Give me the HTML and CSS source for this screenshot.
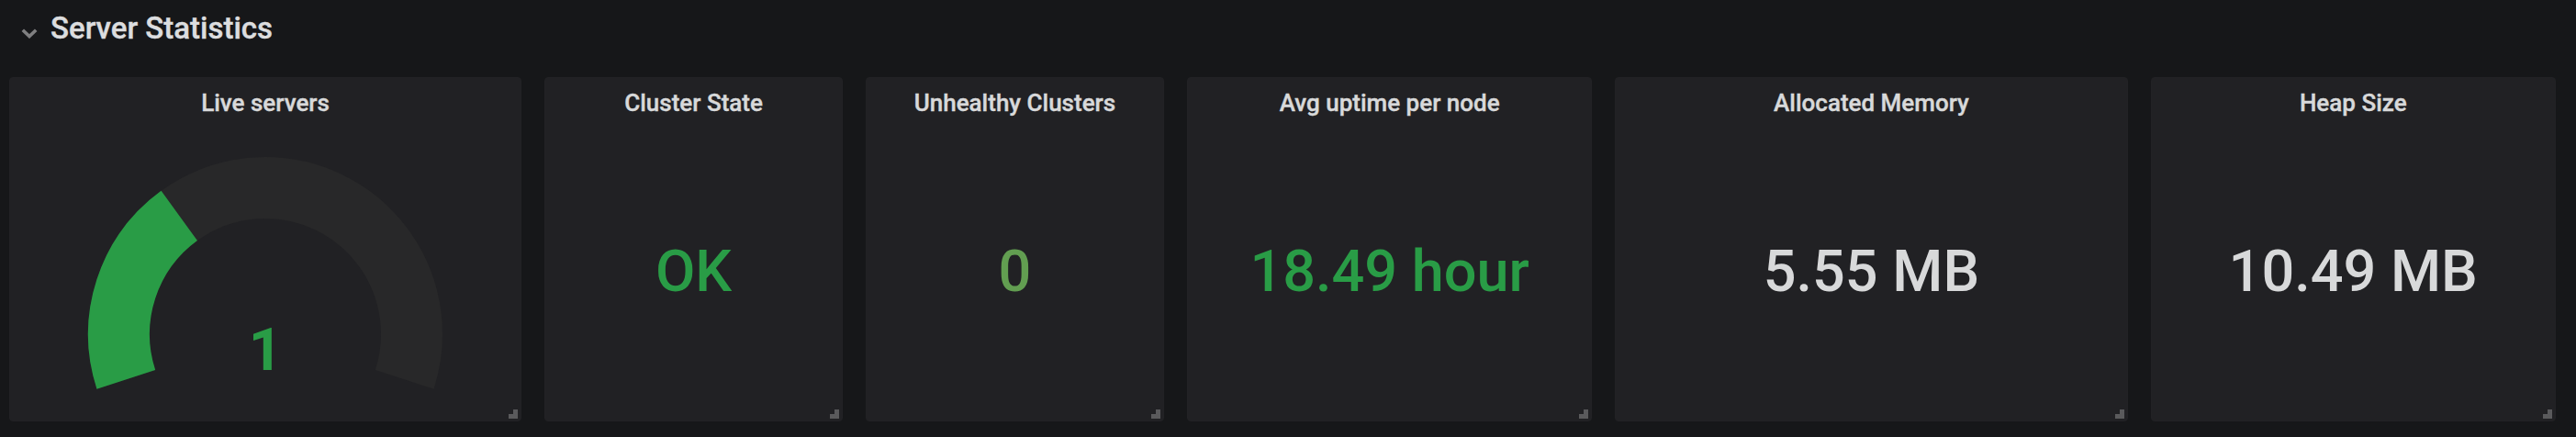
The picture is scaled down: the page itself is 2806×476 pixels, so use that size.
FILE: index.html
```html
<!DOCTYPE html>
<html lang="en">
<head>
<meta charset="utf-8">
<title>Server Statistics</title>
<link rel="stylesheet" href="styles.css">
</head>
<body>
<div class="dash">
  <div class="row-header">
    <svg class="chev" width="18" height="11" viewBox="0 0 18 11"><polyline points="1.8,1.8 9,8.6 16.2,1.8" fill="none" stroke="currentColor" stroke-width="3.6"/></svg>
    <span class="row-title">Server Statistics</span>
  </div>
  <div class="grid">
    <div class="panel span5">
      <div class="panel-header"><span class="panel-title">Live servers</span></div>
      <div class="panel-body">
        <svg class="gauge" width="400" height="262" viewBox="0 0 400 262">
          <path d="M 48.31 249.29 A 159.5 159.5 0 1 1 351.69 249.29" fill="none" stroke="#282829" stroke-width="67"/>
          <path d="M 48.31 249.29 A 159.5 159.5 0 0 1 106.25 70.96" fill="none" stroke="#299c46" stroke-width="67"/>
          <text class="gauge-value" x="200" y="239" text-anchor="middle">1</text>
        </svg>
      </div>
      <span class="resize"></span>
    </div>
    <div class="panel span3">
      <div class="panel-header"><span class="panel-title">Cluster State</span></div>
      <div class="panel-body"><span class="value green">OK</span></div>
      <span class="resize"></span>
    </div>
    <div class="panel span3">
      <div class="panel-header"><span class="panel-title">Unhealthy Clusters</span></div>
      <div class="panel-body"><span class="value olive">0</span></div>
      <span class="resize"></span>
    </div>
    <div class="panel span4">
      <div class="panel-header"><span class="panel-title">Avg uptime per node</span></div>
      <div class="panel-body"><span class="value green">18.49 hour</span></div>
      <span class="resize"></span>
    </div>
    <div class="panel span5">
      <div class="panel-header"><span class="panel-title">Allocated Memory</span></div>
      <div class="panel-body"><span class="value">5.55 MB</span></div>
      <span class="resize"></span>
    </div>
    <div class="panel span4">
      <div class="panel-header"><span class="panel-title">Heap Size</span></div>
      <div class="panel-body"><span class="value">10.49 MB</span></div>
      <span class="resize"></span>
    </div>
  </div>
</div>
</body>
</html>
```

FILE: styles.css
```css
html, body {
  margin: 0;
  padding: 0;
  background: #161719;
}

body {
  font-family: Roboto, "Liberation Sans", sans-serif;
  color: #d8d9da;
}

.dash {
  width: 2806px;
  height: 476px;
  box-sizing: border-box;
  padding: 0 22px 0 10px;
  overflow: hidden;
}

.row-header {
  height: 84px;
  box-sizing: border-box;
  padding: 12px 0 0 13px;
  display: flex;
  align-items: flex-start;
}

.chev {
  color: #7f7f80;
  margin-top: 19px;
  margin-right: 14px;
  flex: none;
}

.row-title {
  font-size: 33px;
  font-weight: 500;
  line-height: 38px;
  color: #dcdddf;
  -webkit-text-stroke: 0.4px #dcdddf;
}

.grid {
  display: grid;
  grid-template-columns: repeat(24, 1fr);
  column-gap: 25px;
}

.span3 { grid-column: span 3; }
.span4 { grid-column: span 4; }
.span5 { grid-column: span 5; }

.panel {
  position: relative;
  height: 375px;
  box-sizing: border-box;
  background: #212124;
  border: 1px solid #222225;
  border-radius: 4px;
  display: flex;
  flex-direction: column;
}

.panel-header {
  height: 48px;
  box-sizing: border-box;
  padding-top: 12px;
  text-align: center;
  flex: none;
}

.panel-title {
  font-size: 26px;
  font-weight: 500;
  line-height: 30px;
  color: #d8d9da;
  white-space: nowrap;
  -webkit-text-stroke: 0.4px #d8d9da;
}

.panel-body {
  flex: 1;
  display: flex;
  align-items: center;
  justify-content: center;
}

.value {
  font-size: 63px;
  font-weight: 500;
  color: #d8d9da;
  white-space: nowrap;
}

.value.green { color: #299c46; }
.value.olive { color: #629e51; }

.gauge {
  display: block;
  margin-top: -1px;
}

.gauge-value {
  font-family: Roboto, "Liberation Sans", sans-serif;
  font-size: 64px;
  font-weight: 700;
  fill: #299c46;
}

.resize {
  position: absolute;
  right: 3px;
  bottom: 2px;
  width: 5px;
  height: 5px;
  border-right: 5px solid #5a5a5c;
  border-bottom: 5px solid #5a5a5c;
}
```
